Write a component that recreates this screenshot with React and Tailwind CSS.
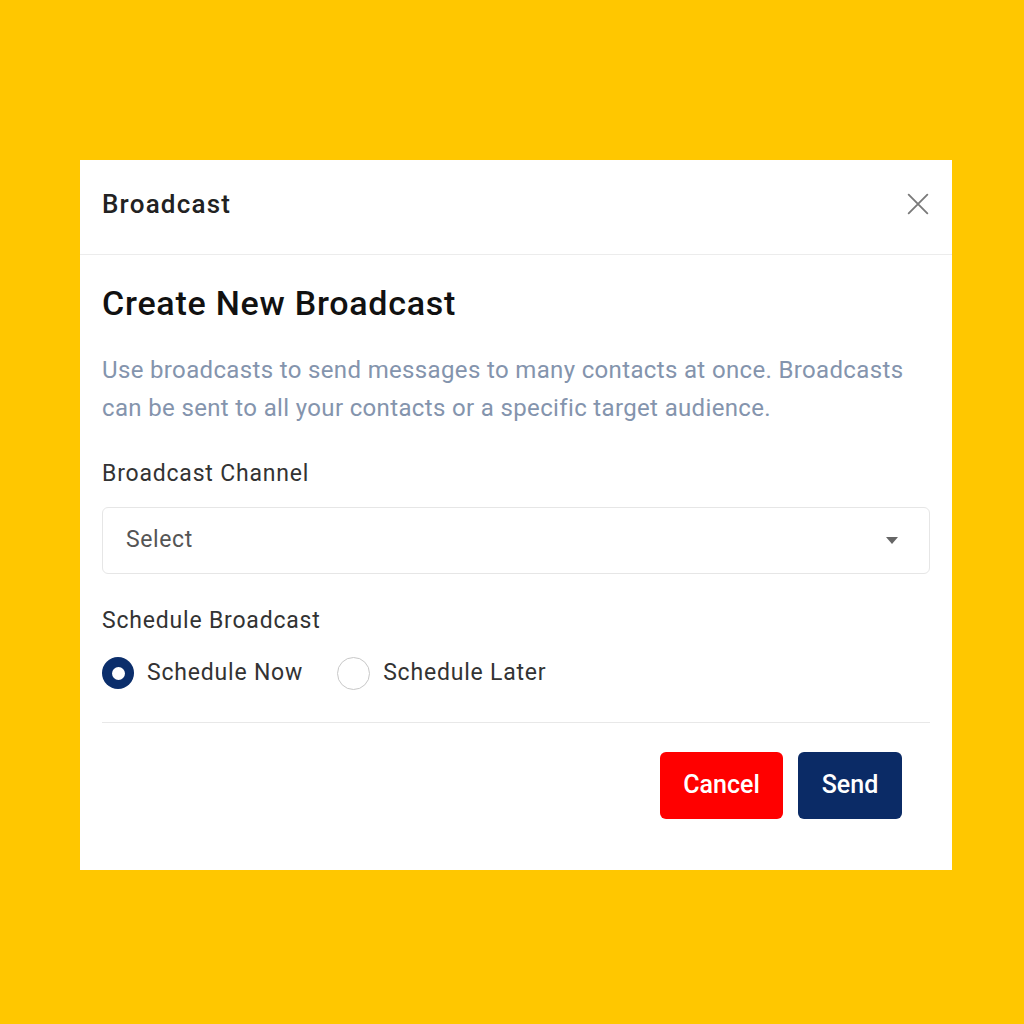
export default function App() {
  return (
    <div className="w-[1024px] h-[1024px] bg-[#ffc700] flex items-start pl-[80px] pt-[160px]" style={{ fontFamily: "Roboto, 'Liberation Sans', sans-serif" }}>
      <div className="w-[872px] h-[710px] bg-white flex flex-col">
        <div className="h-[95px] flex items-center justify-between pl-[22px] pr-[20px] pb-[6px] border-b border-[#ececec]">
          <span className="text-[26px] tracking-[1.2px] text-[#222] font-medium">Broadcast</span>
          <svg width="28" height="28" viewBox="0 0 24 24" fill="none" stroke="#7a7a7a" strokeWidth="1.6" strokeLinecap="round">
            <path d="M4 4L20 20M20 4L4 20" />
          </svg>
        </div>
        <div className="px-[22px] pt-[28px] flex flex-col">
          <h1 className="text-[34px] leading-[40px] tracking-[0.75px] text-[#111] font-medium">Create New Broadcast</h1>
          <p className="mt-[28px] text-[24px] leading-[38px] tracking-[0.35px] text-[#8494ad]">Use broadcasts to send messages to many contacts at once. Broadcasts can be sent to all your contacts or a specific target audience.</p>
          <label className="mt-[32px] text-[23px] leading-[30px] tracking-[0.8px] text-[#333]">Broadcast Channel</label>
          <div className="mt-[18px] h-[67px] border border-[#e6e6e6] rounded-[6px] flex items-center justify-between pl-[23px] pr-[31px]">
            <span className="text-[23px] tracking-[0.6px] text-[#555]">Select</span>
            <svg width="12" height="8" viewBox="0 0 12 8"><path d="M0 0H12L6 7Z" fill="#666" /></svg>
          </div>
          <label className="mt-[32px] text-[23px] leading-[30px] tracking-[0.8px] text-[#333]">Schedule Broadcast</label>
          <div className="mt-[20px] flex items-center">
            <span className="w-[32px] h-[32px] rounded-full bg-[#0b2e6b] flex items-center justify-center">
              <span className="w-[13px] h-[13px] rounded-full bg-white" />
            </span>
            <span className="ml-[13px] text-[23px] tracking-[0.8px] text-[#333]">Schedule Now</span>
            <span className="ml-[34px] w-[33px] h-[33px] rounded-full border border-[#c8c8c8]" />
            <span className="ml-[13px] text-[23px] tracking-[0.8px] text-[#333]">Schedule Later</span>
          </div>
          <div className="mt-[31px] border-t border-[#e8e8e8]" />
          <div className="mt-[29px] flex justify-end gap-[15px] pr-[28px]">
            <button className="w-[123px] h-[67px] rounded-[6px] bg-[#ff0000] text-white text-[25px] font-medium">Cancel</button>
            <button className="w-[104px] h-[67px] rounded-[6px] bg-[#0b2b66] text-white text-[25px] font-medium">Send</button>
          </div>
        </div>
      </div>
    </div>
  );
}
